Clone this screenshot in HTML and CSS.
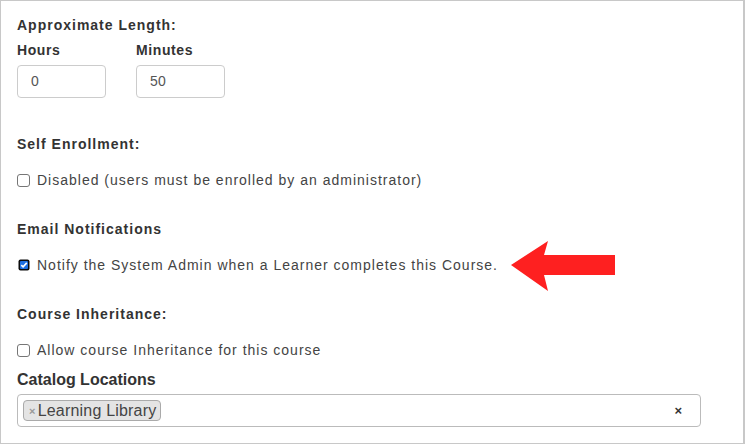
FILE: index.html
```html
<!DOCTYPE html>
<html>
<head>
<meta charset="utf-8">
<link rel="stylesheet" href="styles.css">
</head>
<body>
<div class="panel">
  <div class="label title">Approximate Length:</div>
  <div class="duration">
    <div class="field">
      <div class="label">Hours</div>
      <div class="input">0</div>
    </div>
    <div class="field">
      <div class="label">Minutes</div>
      <div class="input">50</div>
    </div>
  </div>

  <div class="label section">Self Enrollment:</div>
  <div class="check-row"><span class="box"></span>Disabled (users must be enrolled by an administrator)</div>

  <div class="label section">Email Notifications</div>
  <div class="check-row"><span class="box checked"><svg viewBox="0 0 12 12" width="12" height="12"><rect x="0.5" y="0.5" width="11" height="11" rx="2" fill="#0b0b0b"/><rect x="2" y="2" width="8" height="8" rx="1" fill="#1e6fe0"/><path d="M3.3 6.1 L5.1 7.9 L8.8 3.9" stroke="#fff" stroke-width="1.6" fill="none"/></svg></span>Notify the System Admin when a Learner completes this Course.</div>

  <div class="label section">Course Inheritance:</div>
  <div class="check-row"><span class="box"></span>Allow course Inheritance for this course</div>

  <div class="label narrow catalog">Catalog Locations</div>
  <div class="select">
    <span class="tag"><span class="tag-x">×</span>Learning Library</span>
    <span class="clear">×</span>
  </div>

  <svg class="arrow" width="110" height="56" viewBox="0 0 110 56">
    <path d="M1 25 L38 1 L34 15 L105 15 L105 35 L34 35 L38 51 Z" fill="#fe2020"/>
  </svg>
</div>
</body>
</html>
```

FILE: styles.css
```css
* { box-sizing: border-box; }
html, body { margin: 0; padding: 0; background: #fff; }
body {
  font-family: "Liberation Sans", Arial, sans-serif;
  font-size: 14px;
  color: #444;
}
.panel {
  position: relative;
  width: 745px;
  height: 444px;
  border: 1px solid #c8c8c8;
  border-right-width: 2px;
  padding: 14px 16px 0 16px;
}
.label {
  font-weight: bold;
  color: #333;
  line-height: 20px;
  letter-spacing: 1px;
}
.duration {
  display: flex;
  gap: 30px;
  margin-top: 5px;
}
.field .label { letter-spacing: 0.6px; }
.input {
  margin-top: 5px;
  width: 89px;
  height: 33px;
  border: 1px solid #ccc;
  border-radius: 4px;
  padding: 0 0 0 13px;
  line-height: 31px;
  color: #555;
  letter-spacing: 0.3px;
}
.section { margin-top: 36px; }
.duration + .section { margin-top: 36px; }
.check-row + .section { margin-top: 29px; }
.check-row {
  margin-top: 16px;
  display: flex;
  align-items: center;
  line-height: 20px;
  letter-spacing: 1px;
  color: #444;
}
.box {
  width: 13px;
  height: 13px;
  border: 1px solid #767676;
  border-radius: 3px;
  margin: 0 7px 0 0;
  flex: none;
  display: flex;
  align-items: center;
  justify-content: center;
}
.box.checked {
  border: none;
  width: 12px;
  height: 12px;
  margin: 0 7px 0 1px;
}
.box.checked svg { display: block; }
.check-row + .catalog { margin-top: 10px; }
.narrow {
  letter-spacing: 0;
  font-size: 16px;
}
.select {
  margin-top: 4px;
  width: 684px;
  height: 33px;
  border: 1px solid #bbb;
  border-radius: 4px;
  display: flex;
  align-items: center;
  padding: 0 18px 0 5px;
  justify-content: space-between;
}
.tag {
  display: flex;
  align-items: center;
  height: 21px;
  padding: 0 4px 0 5px;
  border: 1px solid #aaa;
  border-radius: 4px;
  background: #e4e4e4;
  font-size: 16px;
  color: #444;
  letter-spacing: 0.2px;
}
.tag-x {
  color: #999;
  font-weight: bold;
  font-size: 11px;
  margin-right: 2px;
}
.clear {
  font-weight: bold;
  font-size: 13px;
  color: #333;
}
.arrow {
  position: absolute;
  left: 509px;
  top: 239px;
}
```
